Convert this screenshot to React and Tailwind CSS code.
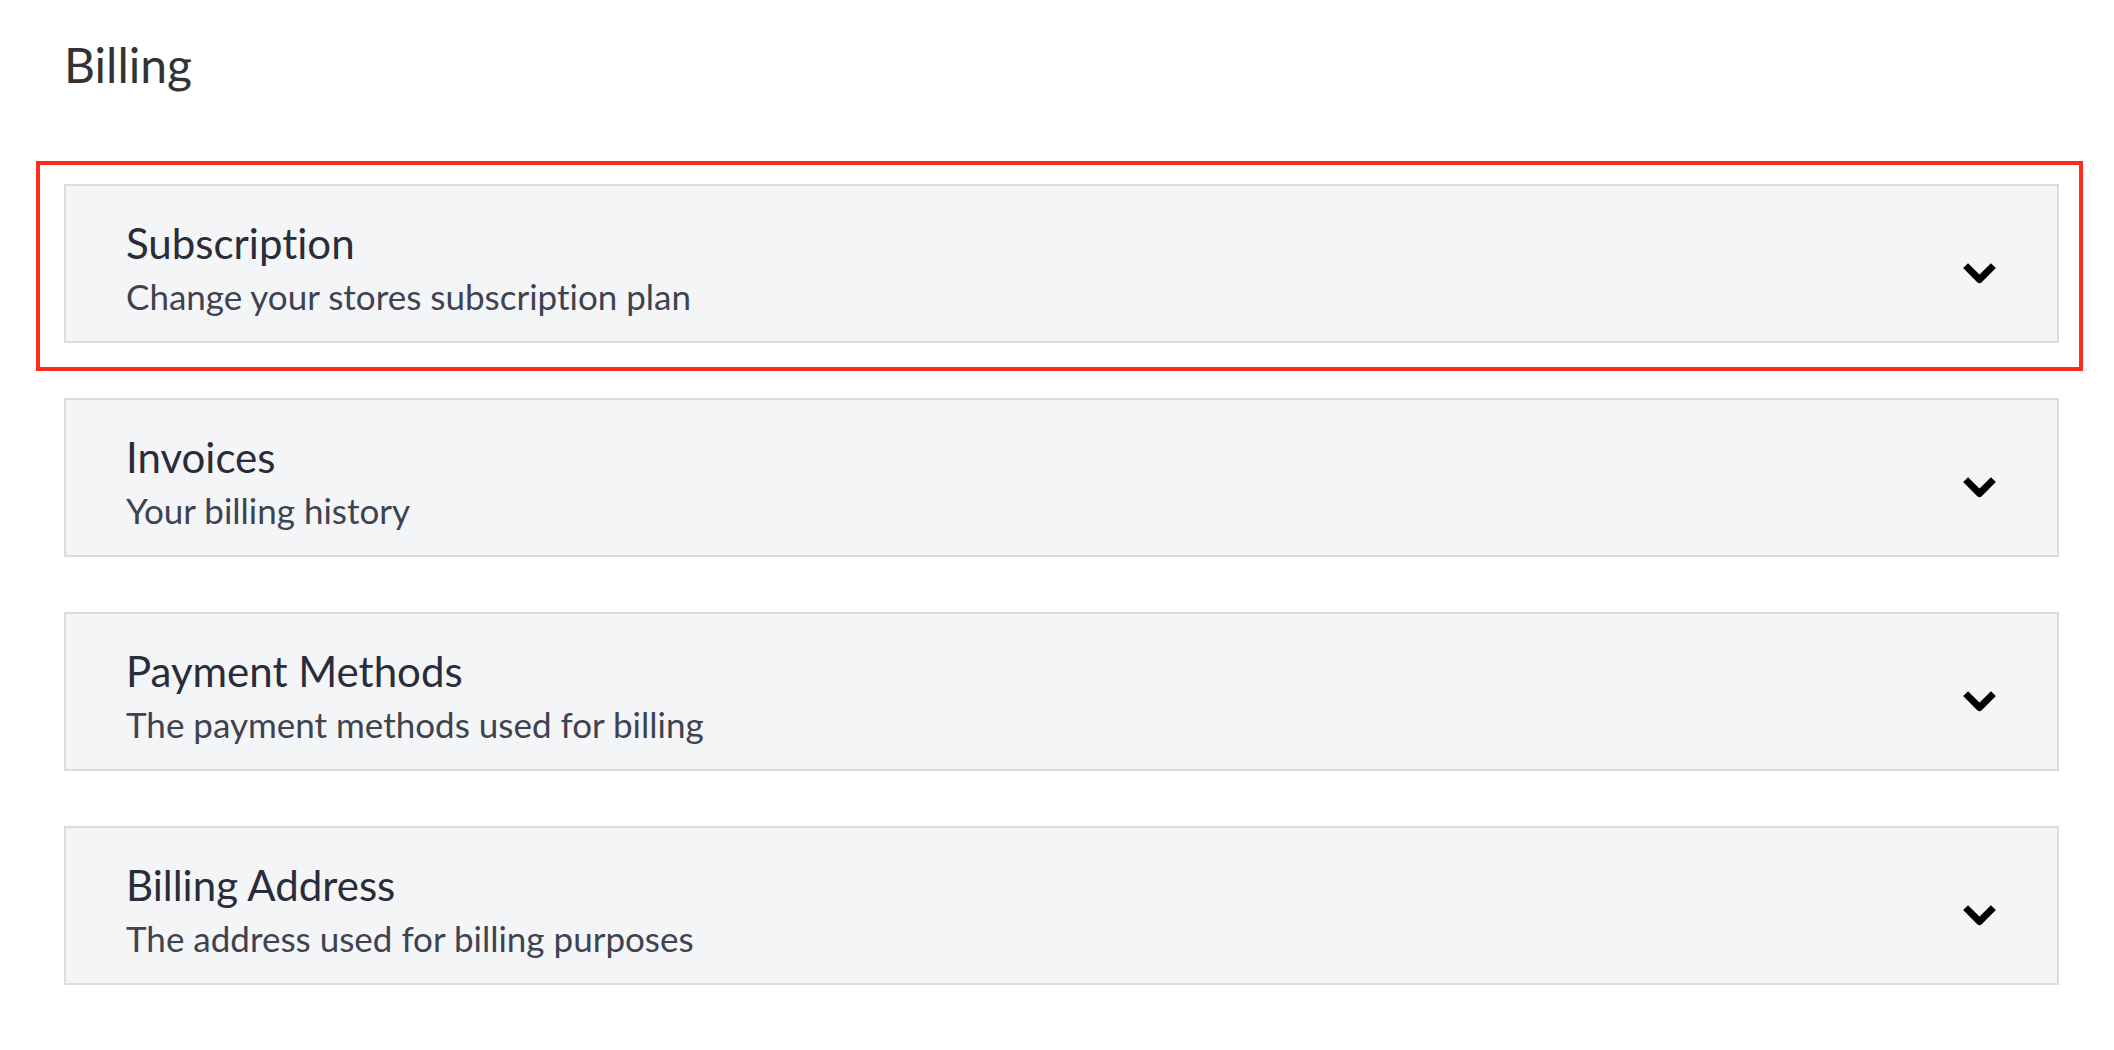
const sections = [
    { title: "Subscription", subtitle: "Change your stores subscription plan", highlight: true },
    { title: "Invoices", subtitle: "Your billing history" },
    { title: "Payment Methods", subtitle: "The payment methods used for billing" },
    { title: "Billing Address", subtitle: "The address used for billing purposes" },
];

function Chevron() {
    return (
        <svg width="35" height="23" viewBox="0 0 35 23" className="shrink-0 mt-[12px]">
            <path d="M3.6 3.6 L17.5 17.5 L31.4 3.6" fill="none" stroke="#000" strokeWidth="7" strokeLinecap="butt" strokeLinejoin="round" />
        </svg>
    );
}

export default function App() {
    return (
        <div className="min-h-screen bg-white pl-[64px] pr-[55px] pt-[37px] font-['Lato',sans-serif] [font-variant-ligatures:none]">
            <h1 className="text-[48px] leading-[55px] text-[#333333] font-normal">Billing</h1>

            <div className="mt-[92px] flex flex-col gap-[55px]">
                {sections.map((s) => (
                    <div key={s.title} className="relative">
                        {/* Highlight frame */}
                        {s.highlight && (
                            <div className="absolute -left-[28px] -top-[23px] -right-[24px] -bottom-[28px] border-4 border-[#fd2b1e] pointer-events-none" />
                        )}
                        <div className="flex items-center justify-between bg-[#f4f5f7] border-2 border-[#dcdcdc] pl-[60px] pr-[60px] pt-[33px] pb-[26px]">
                            <div className="flex flex-col">
                                <span className="text-[42px] leading-[48px] text-[#2a2c39]">{s.title}</span>
                                <span className="mt-[10px] text-[35px] leading-[38px] text-[#3f4250]">{s.subtitle}</span>
                            </div>
                            <Chevron />
                        </div>
                    </div>
                ))}
            </div>
        </div>
    );
}
